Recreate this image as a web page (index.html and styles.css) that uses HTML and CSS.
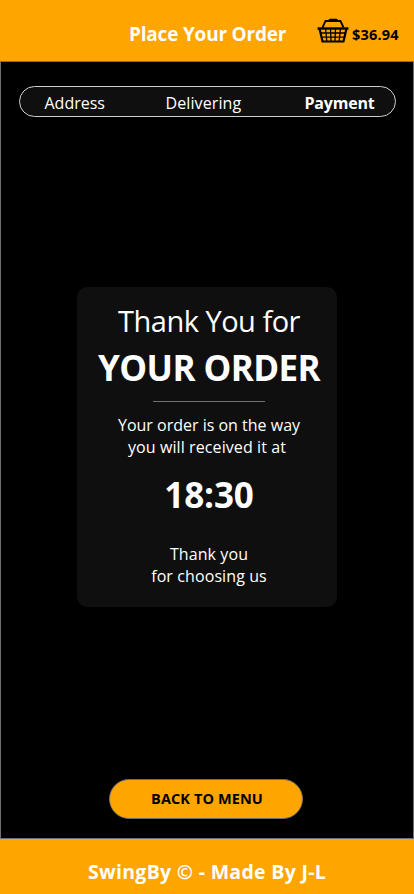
FILE: index.html
```html
<!DOCTYPE html>
<html lang="en">
<head>
<meta charset="utf-8">
<title>Place Your Order</title>
<link rel="stylesheet" href="styles.css">
</head>
<body>
<div class="app">
  <header class="header">
    <h1 class="title">Place Your Order</h1>
    <div class="cart">
      <svg class="basket" viewBox="0 0 32 25" fill="none" stroke="#000">
        <path d="M5.500 9.500 8.500 3H23.500L26.500 9.500" stroke-width="1.800"/>
        <path d="M13 2.400H19.500" stroke-width="3.200" stroke-linecap="round"/>
        <path d="M.5 10.500H31.500" stroke-width="2.400"/>
        <path d="M2.500 10.500 5.500 23.500H26.500L29.500 10.500" stroke-width="2.200"/>
        <path d="M4 15H28M5 19.200H27M8.500 10 9.800 23M13.500 10 14 23M18.500 10 18 23M23.500 10 22.200 23" stroke-width="1.300"/>
      </svg>
      <span class="total">$36.94</span>
    </div>
  </header>
  <main class="main">
    <nav class="steps">
      <span class="step address">Address</span>
      <span class="step delivering">Delivering</span>
      <span class="step payment">Payment</span>
    </nav>
    <section class="card">
      <div class="thanks">Thank You for</div>
      <div class="order">YOUR ORDER</div>
      <hr class="rule">
      <p class="text way">Your order is on the way</p>
      <p class="text receive">you will received it at</p>
      <div class="time">18:30</div>
      <p class="text thank">Thank you</p>
      <p class="text choosing">for choosing us</p>
    </section>
    <button class="back"><span>BACK TO MENU</span></button>
  </main>
  <footer class="footer"><span>SwingBy © - Made By J-L</span></footer>
</div>
</body>
</html>
```
FILE: styles.css
```css
* { box-sizing: border-box; margin: 0; padding: 0; }
body { background: #000; font-family: "Segoe UI", "Open Sans", "Noto Sans", sans-serif; color: #fff; white-space: nowrap; }
.app { width: 414px; height: 894px; display: flex; flex-direction: column; overflow: hidden; }
.header { height: 61px; background: #ffa500; display: flex; align-items: flex-start; padding: 18px 15px 0 129px; }
.title { font-size: 19px; line-height: 32px; font-weight: 700; width: 188px; letter-spacing: -.2px; }
.cart { display: flex; color: #000; }
.basket { width: 32px; height: 25px; margin-right: 3px; flex: none; }
.total { font-size: 14.500px; line-height: 33px; font-weight: 700; letter-spacing: .2px; }
.main { height: 778px; border: 1px solid #707070; background: #000; display: flex; flex-direction: column; align-items: center; padding-top: 24px; }
.steps { width: 377px; height: 31px; border: 1px solid #cfcfcf; border-radius: 16px; background: #0f0f0f; display: flex; padding-left: 25px; font-size: 16px; line-height: 32px; }
.address { width: 121px; letter-spacing: 0; }
.delivering { width: 139px; letter-spacing: .1px; }
.payment { font-weight: 700; letter-spacing: -.2px; }
.card { width: 260px; height: 320px; margin-top: 170px; border-radius: 10px; background: #0f0f0f; text-align: center; padding: 14px 0 0 4px; }
.thanks { font-size: 29px; line-height: 40px; letter-spacing: -.5px; }
.order { font-size: 35px; line-height: 54px; font-weight: 700; letter-spacing: -.6px; }
.rule { width: 112px; height: 1px; border: 0; background: #707070; margin: 6px auto 12px; }
.text { font-size: 16px; line-height: 22px; letter-spacing: .1px; }
.way { letter-spacing: 0; }
.receive { padding-right: 4px; }
.time { font-size: 35px; line-height: 50px; font-weight: 700; letter-spacing: -.1px; margin: 12px 0 23px; }
.back { width: 194px; height: 40px; margin-top: 172px; margin-right: 2px; padding-left: 2px; border: 1px solid #707070; border-radius: 20px; background: #ffa500; color: #000; font: 700 14.500px/38px "Segoe UI", "Open Sans", "Noto Sans", sans-serif; letter-spacing: .1px; }
.footer { height: 55px; background: #ffa500; font-size: 19.500px; line-height: 66px; font-weight: 700; text-align: center; letter-spacing: .3px; }
```
